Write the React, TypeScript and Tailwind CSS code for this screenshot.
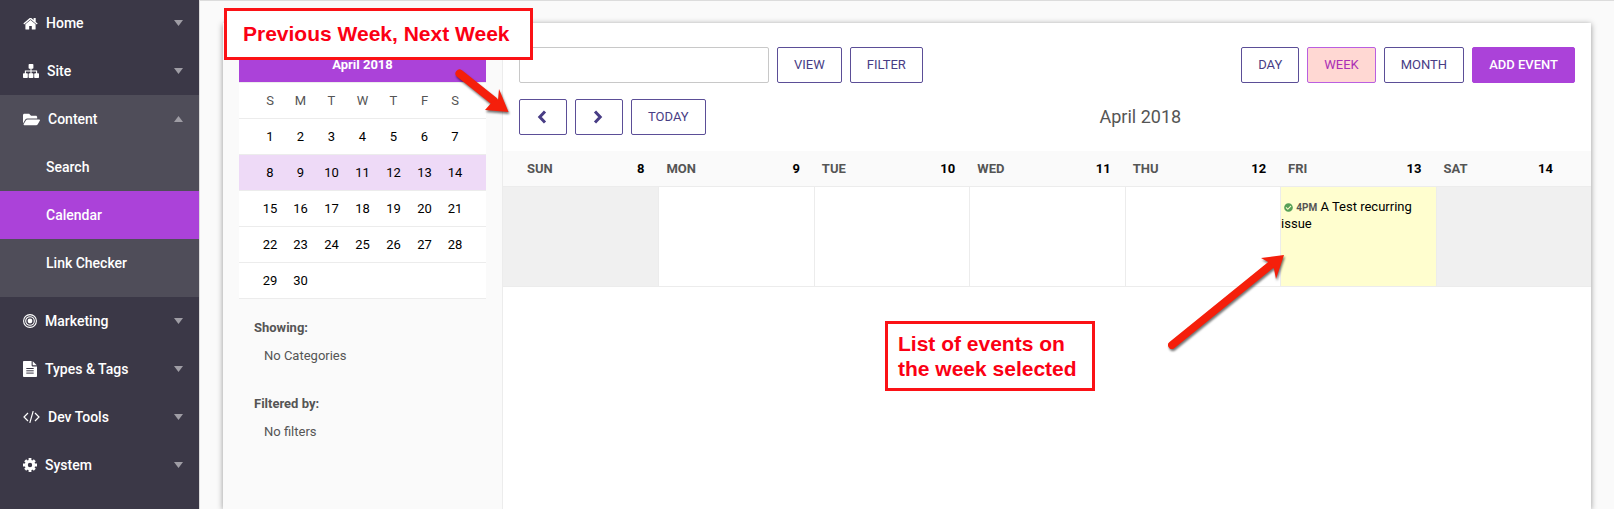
import type { ReactNode } from "react";
import { FaFolderOpen, FaCheckCircle } from "react-icons/fa";

const weeks = [
  [1, 2, 3, 4, 5, 6, 7],
  [8, 9, 10, 11, 12, 13, 14],
  [15, 16, 17, 18, 19, 20, 21],
  [22, 23, 24, 25, 26, 27, 28],
  [29, 30, null, null, null, null, null],
];

const days = [
  { name: "SUN", date: 8, cell: "bg-[#f0f0f0]" },
  { name: "MON", date: 9, cell: "bg-white" },
  { name: "TUE", date: 10, cell: "bg-white" },
  { name: "WED", date: 11, cell: "bg-white" },
  { name: "THU", date: 12, cell: "bg-white" },
  { name: "FRI", date: 13, cell: "bg-[#fffecf]", event: true },
  { name: "SAT", date: 14, cell: "bg-[#f0f0f0]" },
];

function HomeIcon() {
  return (
    <svg width="15" height="13" viewBox="0 0 15 13" fill="currentColor">
      <path d="M7.5 2.9 2.4 7.2v4.7c0 .4.3.6.6.6h3.2V8.9h2.6v3.6H12c.3 0 .6-.2.6-.6V7.2z" />
      <path d="M12.7 4.9V1.2c0-.2-.1-.3-.3-.3h-1.5c-.2 0-.3.1-.3.3V3L8.6 1.3c-.6-.5-1.6-.5-2.2 0L.6 6.2c-.2.1-.2.3 0 .5l.4.6c.2.1.3.1.5 0l6-5 6 5c.2.1.3.1.5 0l.5-.6c.1-.2.1-.4-.1-.5z" />
    </svg>
  );
}

function SitemapIcon() {
  return (
    <svg width="16" height="14" viewBox="0 0 16 14" fill="currentColor">
      <rect x="5.6" y="0" width="4.8" height="4.8" rx="0.8" />
      <rect x="0" y="9.2" width="4.8" height="4.8" rx="0.8" />
      <rect x="5.6" y="9.2" width="4.8" height="4.8" rx="0.8" />
      <rect x="11.2" y="9.2" width="4.8" height="4.8" rx="0.8" />
      <path d="M8 4v6M2.4 10V7h11.2v3" fill="none" stroke="currentColor" strokeWidth="1.1" />
    </svg>
  );
}

function TargetIcon() {
  return (
    <svg width="14" height="14" viewBox="0 0 14 14" fill="none" stroke="currentColor">
      <circle cx="7" cy="7" r="6.4" strokeWidth="1.1" />
      <circle cx="7" cy="7" r="4.3" strokeWidth="1.1" />
      <circle cx="7" cy="7" r="2.4" fill="currentColor" stroke="none" />
    </svg>
  );
}

function FileIcon() {
  return (
    <svg width="14" height="16" viewBox="0 0 14 16">
      <path d="M.8 0H8.6v4.6c0 .4.4.8.8.8H14v9.8c0 .4-.4.8-.8.8H.8c-.4 0-.8-.4-.8-.8V.8C0 .4.4 0 .8 0z" fill="currentColor" />
      <path d="M9.7.2c.2.1.4.3.6.5l3 3c.2.2.4.4.5.6H9.7z" fill="currentColor" />
      <path d="M3.3 7.5h7.4M3.3 9.8h7.4M3.3 12.1h7.4" stroke="#3b3847" strokeWidth="1" />
    </svg>
  );
}

function CodeIcon() {
  return (
    <svg width="17" height="14" viewBox="0 0 17 14" fill="none" stroke="currentColor" strokeWidth="1.2">
      <path d="M5 3 1 7l4 4M12 3l4 4-4 4M10.2 1.2 6.8 12.8" />
    </svg>
  );
}

function CogIcon() {
  return (
    <svg width="14" height="14" viewBox="0 0 14 14" fill="none" stroke="currentColor">
      <circle cx="7" cy="7" r="3.7" strokeWidth="3" />
      <path d="M7 0v3M7 11v3M0 7h3M11 7h3M2.2 2.2l2 2M9.8 9.8l2 2M2.2 11.8l2-2M9.8 4.2l2-2" strokeWidth="2.8" />
    </svg>
  );
}

function NavItem({ icon, label, open }: { icon: ReactNode; label: string; open?: boolean }) {
  return (
    <a href="#" className="flex h-12 items-center gap-2 pr-4 pl-[23px] text-white">
      {icon}
      <span>{label}</span>
      <svg width="9" height="6" viewBox="0 0 9 6" className="ml-auto" fill="#9f9da5">
        <path d={open ? "M0 6 4.5 0 9 6z" : "M0 0h9L4.5 6z"} />
      </svg>
    </a>
  );
}

function Sidebar() {
  return (
    <nav className="-mt-px w-[199px] shrink-0 bg-[#3b3847] text-sm font-medium">
      <NavItem icon={<HomeIcon />} label="Home" />
      <NavItem icon={<SitemapIcon />} label="Site" />
      <div className="bg-[#4f4d59] pb-[10px]">
        <NavItem icon={<FaFolderOpen size={17} />} label="Content" open />
        <a href="#" className="flex h-12 items-center pl-[46px] text-white">
          Search
        </a>
        <a href="#" className="flex h-12 items-center bg-[#ab42d9] pl-[46px] text-white">
          Calendar
        </a>
        <a href="#" className="flex h-12 items-center pl-[46px] text-white">
          Link Checker
        </a>
      </div>
      <NavItem icon={<TargetIcon />} label="Marketing" />
      <NavItem icon={<FileIcon />} label="Types & Tags" />
      <NavItem icon={<CodeIcon />} label="Dev Tools" />
      <NavItem icon={<CogIcon />} label="System" />
    </nav>
  );
}

function Button({ children, label }: { children: ReactNode; label?: string }) {
  return (
    <button
      type="button"
      aria-label={label}
      className="flex h-9 items-center rounded-xs border border-[#5b4e97] px-4 text-[#483d85]"
    >
      {children}
    </button>
  );
}

function MiniCalendar() {
  return (
    <table className="w-[247px] table-fixed border-separate border-spacing-0 bg-white text-center">
      <caption className="h-9 border-b border-[#ececec] bg-[#ab42d9] leading-[35px] font-bold text-white">
        April 2018
      </caption>
      <colgroup>
        <col className="w-[46px]" />
        <col span={5} className="w-[31px]" />
        <col className="w-[46px]" />
      </colgroup>
      <thead>
        <tr>
          {["S", "M", "T", "W", "T", "F", "S"].map((d, i) => (
            <th
              key={i}
              className="h-9 border-b border-[#ececec] p-0 font-normal text-[#555] first:pl-4 last:pr-4"
            >
              {d}
            </th>
          ))}
        </tr>
      </thead>
      <tbody>
        {weeks.map((week, i) => (
          <tr key={i} className={i === 1 ? "bg-[#eedaf7]" : ""}>
            {week.map((d, j) => (
              <td key={j} className="h-9 border-b border-[#ececec] p-0 text-black first:pl-4 last:pr-4">
                {d}
              </td>
            ))}
          </tr>
        ))}
      </tbody>
    </table>
  );
}

interface ArrowProps {
  className: string;
  width: number;
  height: number;
  shaft: string;
  head: string;
}

function Arrow({ className, width, height, shaft, head }: ArrowProps) {
  return (
    <svg
      className={`pointer-events-none absolute drop-shadow-[1px_2px_1px_rgba(0,0,0,0.55)] ${className}`}
      width={width}
      height={height}
      viewBox={`0 0 ${width} ${height}`}
    >
      <path d={shaft} stroke="#f51f0b" strokeWidth="8" strokeLinecap="round" />
      <path d={head} fill="#f51f0b" />
    </svg>
  );
}

export default function App() {
  return (
    <div className="relative flex min-h-screen bg-[#fafafa] font-[Roboto,sans-serif] text-[13px] text-[#555]">
      <Sidebar />

      <main className="flex min-w-0 flex-1 border-t border-l border-[#dcdcdc] pt-[22px] pr-[23px] pl-[23px]">
        <div className="flex min-w-0 flex-1 bg-white shadow-[0_1px_6px_rgba(0,0,0,0.4)]">
          {/* Month overview and filters */}
          <aside className="w-[280px] shrink-0 border-r border-[#ececec] bg-[#fafafa] px-4 pt-6">
            <MiniCalendar />
            <div className="px-[15px] pt-[19px] leading-5">
              <p className="font-bold">Showing:</p>
              <p className="mt-2 pl-[10px]">No Categories</p>
              <p className="mt-7 font-bold">Filtered by:</p>
              <p className="mt-2 pl-[10px]">No filters</p>
            </div>
          </aside>

          {/* Week view */}
          <section className="min-w-0 flex-1">
            <div className="flex gap-2 px-4 pt-6">
              <input
                type="text"
                aria-label="Search events"
                className="h-9 w-[250px] rounded-xs border border-[#c8c8c8] bg-white px-2"
              />
              <Button>VIEW</Button>
              <Button>FILTER</Button>
              <div className="ml-auto flex gap-2">
                <Button>DAY</Button>
                <button
                  type="button"
                  className="h-9 rounded-xs border border-[#b95fe0] bg-[#ffd8d3] px-4 text-[#ab2fb5]"
                >
                  WEEK
                </button>
                <Button>MONTH</Button>
                <button
                  type="button"
                  className="h-9 rounded-xs border border-[#ab42d9] bg-[#ab42d9] px-4 font-medium text-white"
                >
                  ADD EVENT
                </button>
              </div>
            </div>

            <div className="flex items-center gap-2 px-4 py-4">
              <Button label="Previous week">
                <svg width="14" height="14" viewBox="0 0 14 14" fill="none" stroke="currentColor" strokeWidth="3">
                  <path d="M9 1.5 3.8 7 9 12.5" />
                </svg>
              </Button>
              <Button label="Next week">
                <svg width="14" height="14" viewBox="0 0 14 14" fill="none" stroke="currentColor" strokeWidth="3">
                  <path d="M3 1.5 8.2 7 3 12.5" />
                </svg>
              </Button>
              <Button>TODAY</Button>
              <h2 className="-ml-2 flex-1 text-center text-lg leading-6">April 2018</h2>
            </div>

            <table className="w-full table-fixed border-separate border-spacing-0">
              <thead>
                <tr>
                  {days.map((day) => (
                    <th
                      key={day.name}
                      className="h-9 border-b border-[#ececec] bg-[#fafafa] p-0 pr-[14px] pl-2 first:pl-6 last:pr-[38px]"
                    >
                      <div className="flex justify-between font-bold">
                        <span>{day.name}</span>
                        <span className="text-black">{day.date}</span>
                      </div>
                    </th>
                  ))}
                </tr>
              </thead>
              <tbody>
                <tr>
                  {days.map((day) => (
                    <td
                      key={day.name}
                      className={`h-[100px] border-b border-l border-[#ececec] p-0 pt-3 align-top leading-4 text-black first:border-l-0 ${day.cell}`}
                    >
                      {day.event && (
                        <>
                          <FaCheckCircle size={9} className="ml-[3px] inline text-[#55a057]" />{" "}
                          <b className="text-[10px] text-[#555]">4PM</b> A Test recurring issue
                        </>
                      )}
                    </td>
                  ))}
                </tr>
              </tbody>
            </table>
          </section>
        </div>
      </main>

      {/* Callouts */}
      <div className="absolute top-2 left-[224px] flex h-[52px] w-[309px] items-center border-3 border-[#fb1216] bg-white pl-4 font-['Liberation_Sans',sans-serif] text-[21px] font-bold text-[#fb0014]">
        Previous Week, Next Week
      </div>
      <div className="absolute top-[321px] left-[885px] flex h-[70px] w-[210px] items-center border-3 border-[#fb1216] bg-white pl-[10px] font-['Liberation_Sans',sans-serif] text-[21px] leading-[25px] font-bold text-[#fb0014]">
        List of events on
        <br />
        the week selected
      </div>
      <Arrow
        className="top-[66px] left-[452px]"
        width={60}
        height={50}
        shaft="M7.5 7.5 42 35"
        head="M56.5 46 33 44 40 36 46 34 47 23Z"
      />
      <Arrow
        className="top-[250px] left-[1164px]"
        width={124}
        height={102}
        shaft="M8 95 108 14"
        head="M120 5 97 8 106 13 110 19 112 29Z"
      />
    </div>
  );
}
